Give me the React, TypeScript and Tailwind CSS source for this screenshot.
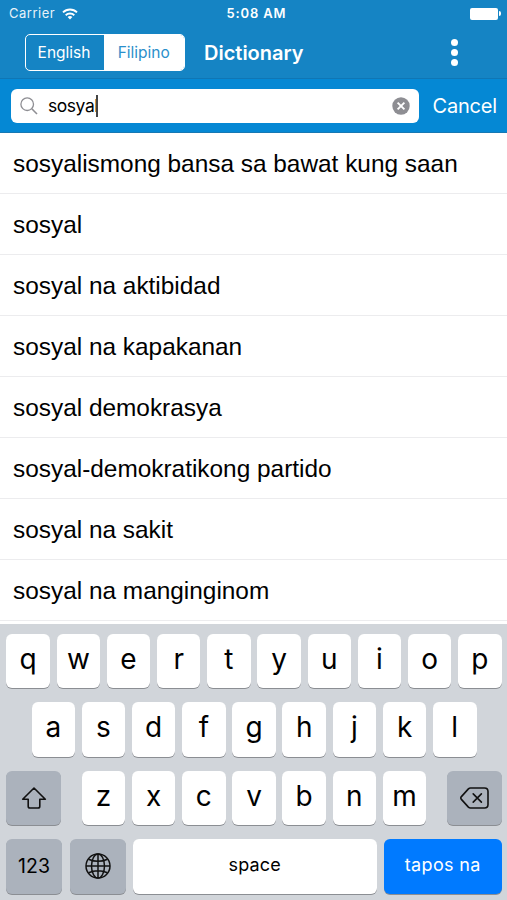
import { useState } from "react";
import clsx from "clsx";

const WORDS = [
  "sosyalismong bansa sa bawat kung saan",
  "sosyal",
  "sosyal na aktibidad",
  "sosyal na kapakanan",
  "sosyal demokrasya",
  "sosyal-demokratikong partido",
  "sosyal na sakit",
  "sosyal na manginginom",
];

const KEY = "flex h-[54.5px] items-center justify-center rounded-[6px] shadow-[0_1px_0_#8b8e93]";

function WifiIcon() {
  return (
    <svg width="16" height="12" viewBox="0 0 16 12" fill="none" stroke="white" strokeWidth="1.9">
      <path d="M1 4.4a10 10 0 0 1 14 0" />
      <path d="M3.7 7.2a6.2 6.2 0 0 1 8.6 0" />
      <path d="M8 11.5 5.6 9.1a3.4 3.4 0 0 1 4.8 0z" fill="white" stroke="none" />
    </svg>
  );
}

function StatusBar() {
  return (
    <div className="grid h-[27px] grid-cols-3 items-center pl-[9px] pr-[6px] text-[13px] text-white">
      <div className="flex items-center gap-[7px]">
        <span className="tracking-[0.5px] opacity-90">Carrier</span>
        <WifiIcon />
      </div>
      <span className="pl-[3px] pt-px text-center font-semibold tracking-[0.85px]">5:08 AM</span>
      <div className="flex items-center justify-end">
        <span className="h-[12px] w-[28px] rounded-[2px] bg-white" />
        <span className="ml-px h-[5px] w-[2px] rounded-r bg-white" />
      </div>
    </div>
  );
}

function NavBar() {
  const [lang, setLang] = useState("Filipino");

  return (
    <div className="flex h-[51px] items-center pl-[25px] pr-[49px]">
      <div className="flex h-[37px] w-[159.5px] overflow-hidden rounded-[5px] border border-white">
        {["English", "Filipino"].map((name) => (
          <button
            key={name}
            onClick={() => setLang(name)}
            className={clsx(
              "pt-px text-[15.5px]",
              name === "English" ? "w-[78px] pr-[2px]" : "flex-1",
              lang === name ? "bg-white text-[#2b8fcb]" : "text-white",
            )}
          >
            {name}
          </button>
        ))}
      </div>
      <h1 className="ml-[19.5px] flex-1 text-[20px] font-semibold text-white">Dictionary</h1>
      <button className="flex flex-col gap-[3px]" aria-label="Menu">
        <span className="size-[7px] rounded-full bg-white" />
        <span className="size-[7px] rounded-full bg-white" />
        <span className="size-[7px] rounded-full bg-white" />
      </button>
    </div>
  );
}

function SearchBar() {
  return (
    <div className="flex h-[54px] items-center border-b border-[#1678b3] bg-[#0588d4] pl-[11px]">
      <div className="flex h-[34px] w-[408px] shrink-0 items-center rounded-[6px] bg-white px-[9px]">
        <svg width="18" height="18" viewBox="0 0 18 18" fill="none" stroke="#8e8e93" strokeWidth="1.3">
          <circle cx="7.2" cy="7.2" r="6.3" />
          <path d="m11.8 11.8 5.2 5.2" strokeWidth="1.6" />
        </svg>
        <span className="ml-[10px] pt-px text-[17.5px] tracking-[-0.45px] text-black">sosyal</span>
        <span className="-ml-[2px] h-[22px] w-[2px] bg-[#444]" />
        <svg className="ml-auto" width="18" height="18" viewBox="0 0 18 18">
          <circle cx="9" cy="9" r="8.7" fill="#8e8e93" />
          <path d="m5.6 5.6 6.8 6.8M12.4 5.6l-6.8 6.8" stroke="white" strokeWidth="1.9" />
        </svg>
      </div>
      <button className="ml-[13.5px] text-[20px] tracking-[-0.2px] text-white">Cancel</button>
    </div>
  );
}

function LetterKey({ letter }: { letter: string }) {
  return (
    <button className={clsx(KEY, "w-[43.5px] bg-white pb-[4px] text-[28px] text-black")}>
      {letter}
    </button>
  );
}

function LetterRow({ letters }: { letters: string }) {
  return (
    <div className="flex justify-center gap-[6.7px]">
      {letters.split("").map((l) => (
        <LetterKey key={l} letter={l} />
      ))}
    </div>
  );
}

function Keyboard() {
  return (
    <div className="flex h-[276px] flex-col gap-[14px] bg-[#d1d5da] pl-[6px] pr-[5px] pt-[9.5px]">
      <LetterRow letters="qwertyuiop" />
      <LetterRow letters="asdfghjkl" />
      <div className="flex justify-between">
        <button className={clsx(KEY, "w-[55px] bg-[#abb2bc]")} aria-label="Shift">
          <svg width="26" height="22" viewBox="0 0 26 22" fill="none" stroke="#111" strokeWidth="1.6" strokeLinejoin="round">
            <path d="M13 1 24.3 12.2H18.8V19.2Q18.8 21 17 21H9Q7.2 21 7.2 19.2V12.2H1.7z" />
          </svg>
        </button>
        <LetterRow letters="zxcvbnm" />
        <button className={clsx(KEY, "w-[55px] bg-[#abb2bc]")} aria-label="Delete">
          <svg width="29" height="22" viewBox="0 0 29 22" fill="none" stroke="#111" strokeWidth="1.6" strokeLinejoin="round">
            <path d="M10.5 1H24.5Q28 1 28 4.5V17.5Q28 21 24.5 21H10.5Q9.3 21 8.4 20.1L1.4 12.4Q.2 11 1.4 9.6L8.4 1.9Q9.3 1 10.5 1z" />
            <path d="m13.2 6.9 8.2 8.2M21.4 6.9l-8.2 8.2" strokeLinecap="round" />
          </svg>
        </button>
      </div>
      <div className="flex gap-[7px] text-[18px] text-black">
        <button className={clsx(KEY, "w-[56px] bg-[#abb2bc] text-[19.5px]")}>123</button>
        <button className={clsx(KEY, "ml-px w-[56px] bg-[#abb2bc]")} aria-label="Keyboard language">
          <svg width="26" height="26" viewBox="0 0 26 26" fill="none" stroke="#111" strokeWidth="1.5">
            <circle cx="13" cy="13" r="12" />
            <ellipse cx="13" cy="13" rx="6.5" ry="12" />
            <path d="M13 1v24M1 13h24M3.5 6.2Q13 10.5 22.5 6.2M3.5 19.8Q13 15.5 22.5 19.8" />
          </svg>
        </button>
        <button className={clsx(KEY, "flex-1 bg-white pb-[3px] tracking-[0.2px]")}>space</button>
        <button className={clsx(KEY, "w-[118.5px] bg-[#007aff] pb-[3px] tracking-[0.35px] text-white")}>
          tapos na
        </button>
      </div>
    </div>
  );
}

export default function App() {
  return (
    <div className="flex h-[900px] w-[507px] flex-col overflow-hidden bg-white font-['Inter',sans-serif]">
      <header className="border-b border-[#0f76b5] bg-[#1584c4]">
        <StatusBar />
        <NavBar />
      </header>
      <SearchBar />
      <ul className="min-h-0 flex-1 overflow-hidden font-['Liberation_Sans',sans-serif] text-[24.4px] text-black">
        {WORDS.map((word) => (
          <li key={word} className="flex h-[61px] items-center border-b border-[#ececee] pl-[13px] pt-[2px]">
            {word}
          </li>
        ))}
      </ul>
      <Keyboard />
    </div>
  );
}
